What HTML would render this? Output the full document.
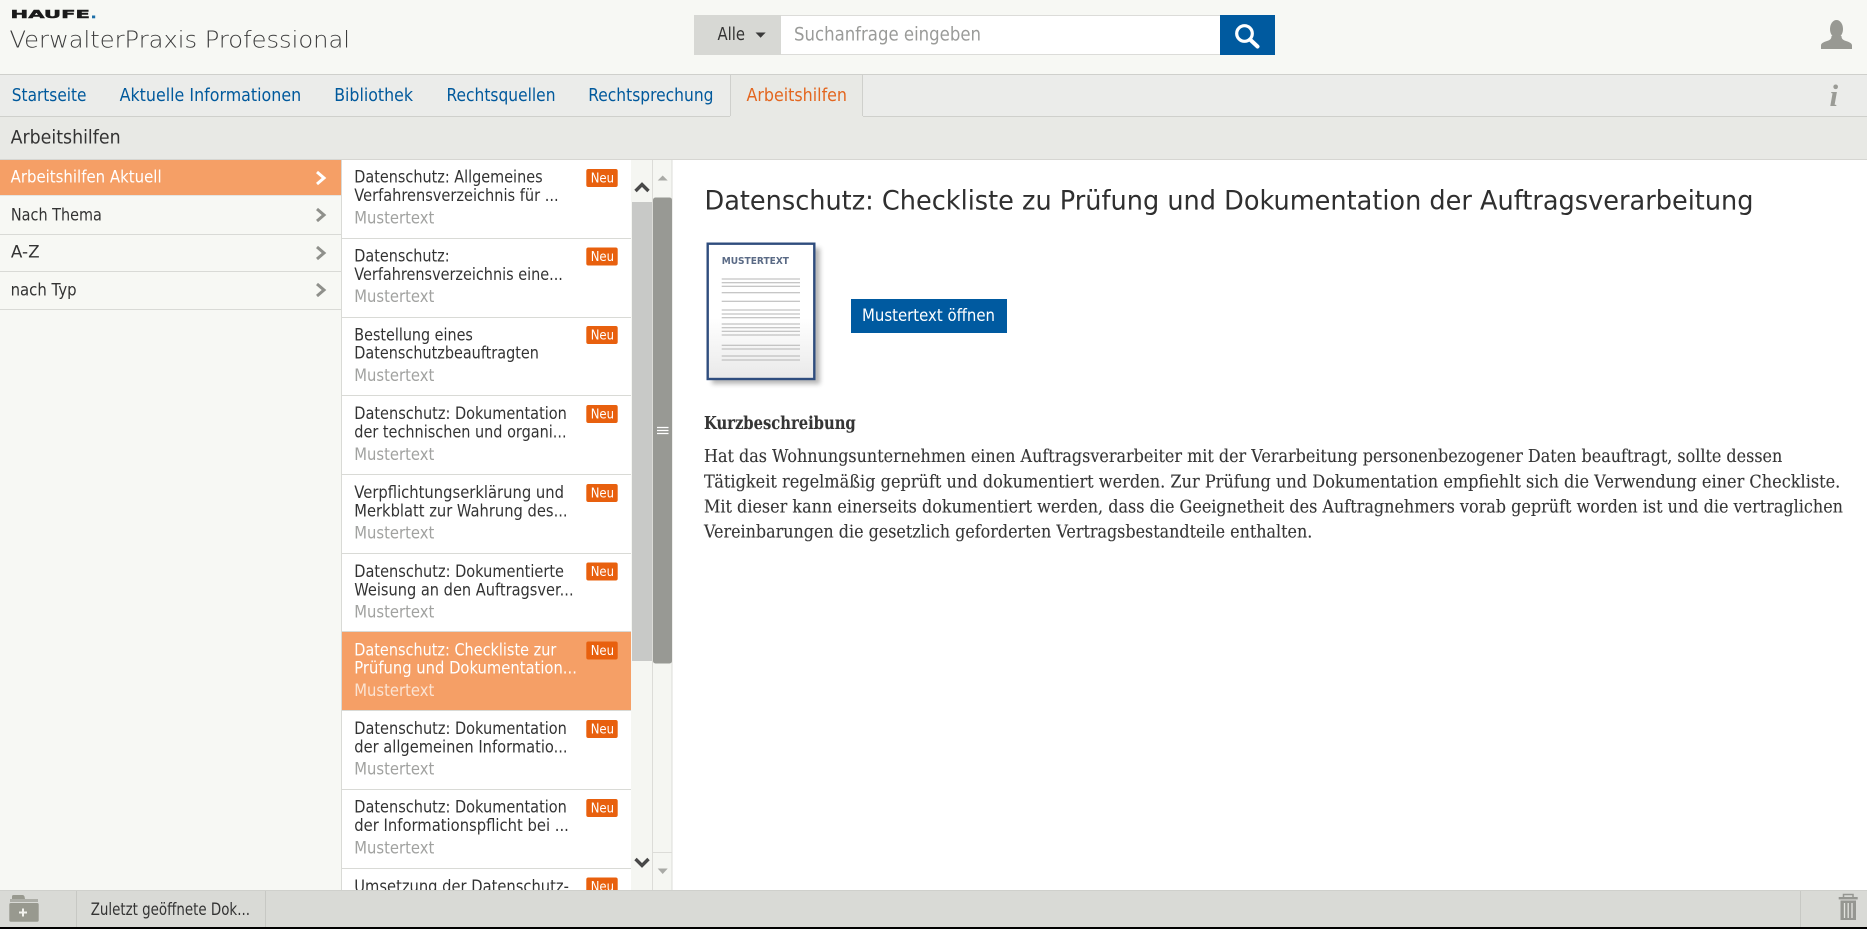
<!DOCTYPE html>
<html lang="de"><head><meta charset="utf-8"><title>VerwalterPraxis Professional</title>
<style>
html,body{margin:0;padding:0;background:#000;width:1867px;height:929px;overflow:hidden}
svg{display:block}
text{font-family:"DejaVu Sans","Liberation Sans",sans-serif;white-space:pre}
.s{font-family:"DejaVu Serif","Liberation Serif",serif;fill:#353535;font-size:17.5px;stroke:#353535;stroke-width:.12px}
.n{font-size:17.5px}.l{font-size:16.5px;fill:#333}.m{font-size:16.5px;fill:#a1a2a0}
.sb{font-size:17px;fill:#333}.b{font-size:13px;fill:#fff}
.w{fill:#fff}
.nav{fill:#00599c}
</style></head><body>
<svg xmlns="http://www.w3.org/2000/svg" width="1867" height="929" viewBox="0 0 1867 929">
<defs>
<linearGradient id="g" x1="0" y1="0" x2="0" y2="1"><stop offset="0.55" stop-color="#fff"/><stop offset="1" stop-color="#e9e9e9"/></linearGradient>
<filter id="bl" x="-20%" y="-20%" width="140%" height="140%"><feGaussianBlur stdDeviation="2.5"/></filter>
</defs>
<!-- header -->
<rect width="1867" height="74" fill="#f7f8f4"/>
<text x="10.500" y="18" font-size="10.500" font-weight="700" fill="#1a1a1a" stroke="#1a1a1a" stroke-width=".4" textLength="79.500" lengthAdjust="spacingAndGlyphs">HAUFE</text>
<rect x="92" y="15.500" width="3.200" height="2.800" fill="#1d6fa8"/>
<text x="9.500" y="47.500" font-size="23.500" font-weight="200" fill="#3b3b3b" textLength="340.500" lengthAdjust="spacingAndGlyphs">VerwalterPraxis Professional</text>
<!-- search -->
<rect x="694" y="15" width="87" height="40" fill="#d7d8d4"/>
<text x="717.500" y="40" font-size="17.500" fill="#333" textLength="27.500" lengthAdjust="spacingAndGlyphs">Alle</text>
<path d="M755.500 32.500h10.200l-5.100 5.200z" fill="#3a3a3a"/>
<rect x="781" y="15" width="439" height="40" fill="#fff"/>
<path d="M781 15.500h439M781 54.500h439" stroke="#dcdcd9" stroke-width="1"/>
<text x="794" y="40.500" font-size="18.500" fill="#9a9b99" textLength="187" lengthAdjust="spacingAndGlyphs">Suchanfrage eingeben</text>
<rect x="1220" y="15" width="55" height="40" fill="#005a9f"/>
<circle cx="1244.500" cy="33.500" r="7.800" fill="none" stroke="#fff" stroke-width="3.200"/>
<path d="M1250 39.500l7.500 7" stroke="#fff" stroke-width="4" stroke-linecap="round"/>
<!-- user -->
<ellipse cx="1836.500" cy="29" rx="6.500" ry="9" fill="#989993"/>
<path d="M1821 49v-3.500c0-2.500 3-3.500 6-4.500 3-1 4.500-2 4.500-5h10c0 3 1.500 4 4.500 5 3 1 6 2 6 4.500V49z" fill="#989993"/>
<!-- nav -->
<rect y="74" width="1867" height="43" fill="#ebecea"/>
<rect y="74" width="1867" height="1" fill="#cfd0cc"/>
<rect y="116" width="1867" height="1" fill="#cfd0cc"/>
<rect y="117" width="1867" height="43" fill="#e8e9e5"/>
<rect y="159" width="1867" height="1" fill="#d6d6d2"/>
<rect x="730" y="75" width="133" height="42" fill="#e8e9e5"/>
<path d="M730.500 75v41M862.500 75v41" stroke="#cfd0cc"/>
<text class="n nav" x="11.800" y="101" textLength="74.700" lengthAdjust="spacingAndGlyphs">Startseite</text>
<text class="n nav" x="119.600" y="101" textLength="181.600" lengthAdjust="spacingAndGlyphs">Aktuelle Informationen</text>
<text class="n nav" x="334.200" y="101" textLength="78.800" lengthAdjust="spacingAndGlyphs">Bibliothek</text>
<text class="n nav" x="446.500" y="101" textLength="109" lengthAdjust="spacingAndGlyphs">Rechtsquellen</text>
<text class="n nav" x="588.200" y="101" textLength="125.300" lengthAdjust="spacingAndGlyphs">Rechtsprechung</text>
<text class="n" fill="#e3661f" x="746.500" y="101" textLength="100.500" lengthAdjust="spacingAndGlyphs">Arbeitshilfen</text>
<text x="1829.500" y="106" font-size="31" font-style="italic" font-weight="700" fill="#9a9b96" style="font-family:'Liberation Serif',serif">i</text>
<text x="10.600" y="143.500" font-size="18.500" fill="#333" textLength="110" lengthAdjust="spacingAndGlyphs">Arbeitshilfen</text>
<!-- sidebar -->
<rect y="160" width="342" height="730" fill="#f7f8f4"/>
<rect y="160" width="341" height="35" fill="#f59f66"/>
<path d="M0 234.500h341M0 271.500h341M0 309.500h341" stroke="#d9dad6"/>
<rect y="195" width="341" height="1" fill="#e5e5e1"/>
<text class="sb" style="fill:#fff" x="10.600" y="182.500" textLength="151" lengthAdjust="spacingAndGlyphs">Arbeitshilfen Aktuell</text>
<text class="sb" x="10.900" y="220.500" textLength="91" lengthAdjust="spacingAndGlyphs">Nach Thema</text>
<text class="sb" x="10.900" y="257.500" textLength="28.700" lengthAdjust="spacingAndGlyphs">A-Z</text>
<text class="sb" x="10.600" y="295.500" textLength="66" lengthAdjust="spacingAndGlyphs">nach Typ</text>
<path d="M317 172l7 6-7 6" fill="none" stroke="#fff" stroke-width="3"/>
<path d="M317 209l7 6-7 6M317 247l7 6-7 6M317 284l7 6-7 6" fill="none" stroke="#8f908b" stroke-width="3"/>
<!-- list -->
<rect x="342" y="160" width="289" height="730" fill="#fff"/>
<rect x="341" y="160" width="1" height="730" fill="#d9dad6"/>
<rect x="342" y="632" width="289" height="78" fill="#f59f66"/>
<path d="M342 238.500h289M342 317.500h289M342 395.500h289M342 474.500h289M342 553.500h289M342 631.500h289M342 710.500h289M342 789.500h289M342 868.500h289" stroke="#d9dad6"/>
<g transform="translate(-.4,-.7)">
<text class="l" x="354.700" y="183.300" textLength="188.300" lengthAdjust="spacingAndGlyphs">Datenschutz: Allgemeines</text>
<text class="l" x="354.700" y="201.700" textLength="204.300" lengthAdjust="spacingAndGlyphs">Verfahrensverzeichnis für ...</text>
<text class="m" x="354.700" y="224" textLength="80" lengthAdjust="spacingAndGlyphs">Mustertext</text>

<text class="l" x="354.700" y="262" textLength="95.300" lengthAdjust="spacingAndGlyphs">Datenschutz:</text>
<text class="l" x="354.700" y="280.500" textLength="208.600" lengthAdjust="spacingAndGlyphs">Verfahrensverzeichnis eine...</text>
<text class="m" x="354.700" y="302.800" textLength="80" lengthAdjust="spacingAndGlyphs">Mustertext</text>

<text class="l" x="354.700" y="341" textLength="118.600" lengthAdjust="spacingAndGlyphs">Bestellung eines</text>
<text class="l" x="354.700" y="359.400" textLength="184.600" lengthAdjust="spacingAndGlyphs">Datenschutzbeauftragten</text>
<text class="m" x="354.700" y="381.700" textLength="80" lengthAdjust="spacingAndGlyphs">Mustertext</text>

<text class="l" x="354.700" y="419.900" textLength="212.600" lengthAdjust="spacingAndGlyphs">Datenschutz: Dokumentation</text>
<text class="l" x="354.700" y="438.300" textLength="212.300" lengthAdjust="spacingAndGlyphs">der technischen und organi...</text>
<text class="m" x="354.700" y="460.600" textLength="80" lengthAdjust="spacingAndGlyphs">Mustertext</text>

<text class="l" x="354.700" y="498.700" textLength="209.700" lengthAdjust="spacingAndGlyphs">Verpflichtungserklärung und</text>
<text class="l" x="354.700" y="517.100" textLength="213.300" lengthAdjust="spacingAndGlyphs">Merkblatt zur Wahrung des...</text>
<text class="m" x="354.700" y="539.400" textLength="80" lengthAdjust="spacingAndGlyphs">Mustertext</text>

<text class="l" x="354.700" y="577.600" textLength="209.700" lengthAdjust="spacingAndGlyphs">Datenschutz: Dokumentierte</text>
<text class="l" x="354.700" y="596" textLength="219.300" lengthAdjust="spacingAndGlyphs">Weisung an den Auftragsver...</text>
<text class="m" x="354.700" y="618.300" textLength="80" lengthAdjust="spacingAndGlyphs">Mustertext</text>

<text class="l" style="fill:#fff" x="354.700" y="656" textLength="202" lengthAdjust="spacingAndGlyphs">Datenschutz: Checkliste zur</text>
<text class="l" style="fill:#fff" x="354.700" y="674.400" textLength="222.600" lengthAdjust="spacingAndGlyphs">Prüfung und Dokumentation...</text>
<text class="m" style="fill:#fbe3d2" x="354.700" y="696.500" textLength="80" lengthAdjust="spacingAndGlyphs">Mustertext</text>

<text class="l" x="354.700" y="734.600" textLength="212.600" lengthAdjust="spacingAndGlyphs">Datenschutz: Dokumentation</text>
<text class="l" x="354.700" y="753" textLength="213.300" lengthAdjust="spacingAndGlyphs">der allgemeinen Informatio...</text>
<text class="m" x="354.700" y="775" textLength="80" lengthAdjust="spacingAndGlyphs">Mustertext</text>

<text class="l" x="354.700" y="813.400" textLength="212.600" lengthAdjust="spacingAndGlyphs">Datenschutz: Dokumentation</text>
<text class="l" x="354.700" y="831.800" textLength="214.600" lengthAdjust="spacingAndGlyphs">der Informationspflicht bei ...</text>
<text class="m" x="354.700" y="854" textLength="80" lengthAdjust="spacingAndGlyphs">Mustertext</text>

<text class="l" x="354.700" y="892.500" textLength="214.600" lengthAdjust="spacingAndGlyphs">Umsetzung der Datenschutz-</text>
</g>
<g fill="#e8600e">
<rect x="586.300" y="169" width="31.400" height="18" rx="2"/>
<rect x="586.300" y="247.500" width="31.400" height="18" rx="2"/>
<rect x="586.300" y="326" width="31.400" height="18" rx="2"/>
<rect x="586.300" y="405" width="31.400" height="18" rx="2"/>
<rect x="586.300" y="484" width="31.400" height="18" rx="2"/>
<rect x="586.300" y="562.500" width="31.400" height="18" rx="2"/>
<rect x="586.300" y="641.500" width="31.400" height="18" rx="2"/>
<rect x="586.300" y="720" width="31.400" height="18" rx="2"/>
<rect x="586.300" y="799" width="31.400" height="18" rx="2"/>
<rect x="586.300" y="877.500" width="31.400" height="18" rx="2"/>
</g>
<text class="b" x="590.700" y="182.500" textLength="23.300" lengthAdjust="spacingAndGlyphs">Neu</text>
<text class="b" x="590.700" y="261" textLength="23.300" lengthAdjust="spacingAndGlyphs">Neu</text>
<text class="b" x="590.700" y="339.500" textLength="23.300" lengthAdjust="spacingAndGlyphs">Neu</text>
<text class="b" x="590.700" y="418.500" textLength="23.300" lengthAdjust="spacingAndGlyphs">Neu</text>
<text class="b" x="590.700" y="497.500" textLength="23.300" lengthAdjust="spacingAndGlyphs">Neu</text>
<text class="b" x="590.700" y="576" textLength="23.300" lengthAdjust="spacingAndGlyphs">Neu</text>
<text class="b" x="590.700" y="655" textLength="23.300" lengthAdjust="spacingAndGlyphs">Neu</text>
<text class="b" x="590.700" y="733.500" textLength="23.300" lengthAdjust="spacingAndGlyphs">Neu</text>
<text class="b" x="590.700" y="812.500" textLength="23.300" lengthAdjust="spacingAndGlyphs">Neu</text>
<text class="b" x="590.700" y="891" textLength="23.300" lengthAdjust="spacingAndGlyphs">Neu</text>
<!-- scrollbar 1 -->
<rect x="631" y="160" width="21" height="730" fill="#f5f6f2"/>
<rect x="632" y="202" width="20" height="459" fill="#c8c9c7"/>
<path d="M635.500 191l6.500-6.500 6.500 6.500" fill="none" stroke="#484848" stroke-width="3.400"/>
<path d="M635.500 859l6.500 6.500 6.500-6.500" fill="none" stroke="#484848" stroke-width="3.400"/>
<!-- scrollbar 2 -->
<rect x="652" y="160" width="20.500" height="730" fill="#f5f6f2"/>
<path d="M652.500 160v730M672 160v730M653 852.500h19" stroke="#dcdcd8"/>
<rect x="653" y="197.500" width="19" height="466" rx="2.500" fill="#989994"/>
<path d="M657.700 180.500l5-5 5 5z" fill="#a9aaa6"/>
<path d="M657.700 868.500l5 5.500 5-5.500z" fill="#a9aaa6"/>
<path d="M657 427.500h11.500M657 430.500h11.500M657 433.500h11.500" stroke="#fff" stroke-width="1.300"/>
<!-- content -->
<rect x="672.500" y="160" width="1194.500" height="730" fill="#fff"/>
<text x="704.500" y="209.500" font-size="27" fill="#2f2f2f" textLength="1049" lengthAdjust="spacingAndGlyphs">Datenschutz: Checkliste zu Prüfung und Dokumentation der Auftragsverarbeitung</text>
<!-- doc -->
<rect x="712" y="248" width="108" height="136" fill="#555" opacity=".42" filter="url(#bl)"/>
<rect x="707.700" y="243.700" width="106.600" height="135.300" fill="url(#g)" stroke="#2f4d7e" stroke-width="2.400"/>
<text x="721.700" y="264" font-size="10" font-weight="700" fill="#5a6a85" textLength="67.300" lengthAdjust="spacingAndGlyphs">MUSTERTEXT</text>
<path d="M721.700 279h78.300M721.700 282.700h78.300M721.700 286.300h78.300M721.700 292.700h78.300M721.700 301.300h78.300M721.700 310h78.300M721.700 314h78.300M721.700 317.700h78.300M721.700 324h78.300M721.700 327.700h78.300M721.700 331.300h78.300M721.700 335h78.300M721.700 345.300h78.300M721.700 349h78.300M721.700 356h78.300M721.700 360h78.300" stroke="#b4b4b4" stroke-width="1"/>
<!-- button -->
<rect x="851" y="299" width="156" height="34" fill="#005aa0"/>
<text x="862" y="321" font-size="17" fill="#fff" textLength="133" lengthAdjust="spacingAndGlyphs">Mustertext öffnen</text>
<!-- text -->
<text class="s" x="704" y="429" font-weight="700" textLength="151.700" lengthAdjust="spacingAndGlyphs">Kurzbeschreibung</text>
<text class="s" x="704" y="462" textLength="1078.300" lengthAdjust="spacingAndGlyphs">Hat das Wohnungsunternehmen einen Auftragsverarbeiter mit der Verarbeitung personenbezogener Daten beauftragt, sollte dessen</text>
<text class="s" x="704" y="487.500" textLength="1136.300" lengthAdjust="spacingAndGlyphs">Tätigkeit regelmäßig geprüft und dokumentiert werden. Zur Prüfung und Dokumentation empfiehlt sich die Verwendung einer Checkliste.</text>
<text class="s" x="704" y="512.500" textLength="1139" lengthAdjust="spacingAndGlyphs">Mit dieser kann einerseits dokumentiert werden, dass die Geeignetheit des Auftragnehmers vorab geprüft worden ist und die vertraglichen</text>
<text class="s" x="704" y="537.500" textLength="608.300" lengthAdjust="spacingAndGlyphs">Vereinbarungen die gesetzlich geforderten Vertragsbestandteile enthalten.</text>
<!-- bottom bar -->
<rect y="890" width="1867" height="37" fill="#d9dad6"/>
<rect y="890" width="1867" height="1" fill="#cfd0cc"/>
<rect y="927" width="1867" height="2" fill="#000"/>
<path d="M76.500 891v36M265.500 891v36M1800.500 891v36" stroke="#c7c8c4"/>
<text x="90.700" y="915" font-size="16.500" fill="#333" textLength="159.300" lengthAdjust="spacingAndGlyphs">Zuletzt geöffnete Dok...</text>
<path d="M12 899v-2.500c0-1 .6-1.500 1.500-1.500h9c1 0 1.500.5 2 1.500l.5 2.500z" fill="#98998f"/>
<rect x="10" y="899" width="28" height="3" fill="#adaea7"/>
<rect x="9.300" y="903" width="29.400" height="18.700" rx="1.500" fill="#98998f"/>
<path d="M19 912.500h8M23 908.500v8" stroke="#f2f2ee" stroke-width="2"/>
<path d="M1843.500 897v-2.500h9.500v2.500" fill="none" stroke="#959691" stroke-width="1.500"/>
<rect x="1838.700" y="897" width="19" height="2.400" fill="#959691"/>
<rect x="1840.500" y="900.500" width="15.500" height="19.500" fill="#959691"/>
<path d="M1844.500 903v15M1848.200 903v15M1852 903v15" stroke="#e3e3df" stroke-width="1.300"/>
</svg>
</body></html>
